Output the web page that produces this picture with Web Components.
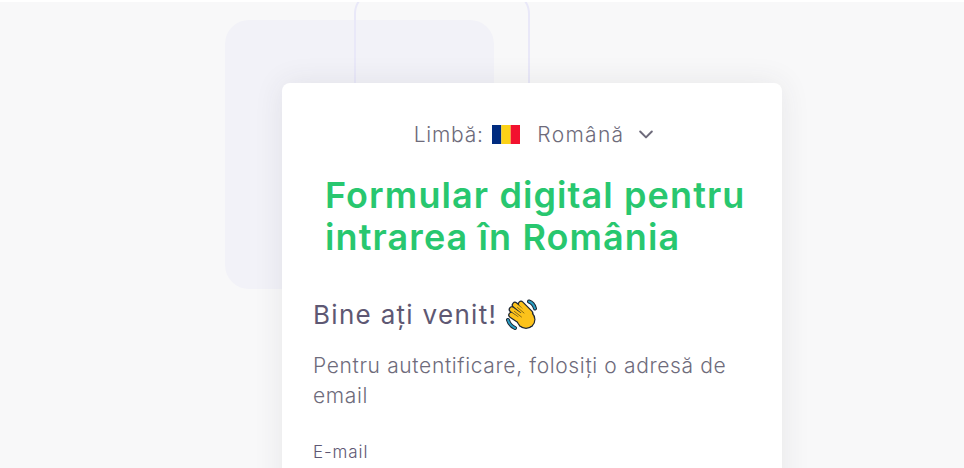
<!DOCTYPE html>
<html lang="ro">
<head>
<meta charset="utf-8">
<title>Formular digital</title>
<style>
    html, body { margin: 0; height: 100%; overflow: hidden; }
    body { background: #f8f8f9; border-top: 2px solid #fff; box-sizing: border-box; font-family: "Inter", "Liberation Sans", sans-serif; }
</style>
</head>
<body>
<login-page>
    <login-card>
        <lang-select slot="lang"></lang-select>
        <span slot="title">Formular digital pentru intrarea în România</span>
        <welcome-box></welcome-box>
    </login-card>
</login-page>

<script>
const pageTemplate = document.createElement("template");
pageTemplate.innerHTML = `
<style>
    :host {
        display: block;
        position: relative;
        height: 466px;
        overflow: hidden;
    }
    .square {
        position: absolute;
        left: 225px;
        top: 18px;
        width: 269px;
        height: 269px;
        border-radius: 24px;
        background: #f2f2f8;
    }
    .outline {
        position: absolute;
        left: 354px;
        top: -12px;
        width: 172px;
        height: 200px;
        border: 2px solid #e9e8f8;
        border-radius: 24px;
    }
    .wrap {
        position: relative;
        display: flex;
        padding: 81px 0 0 282px;
    }
</style>
<div class="square"></div>
<div class="outline"></div>
<div class="wrap"><slot></slot></div>
`;

class LoginPage extends HTMLElement {
    constructor() {
        super();
        this.attachShadow({mode: 'open'});
        this.shadowRoot.append(pageTemplate.content.cloneNode(true));
    }
}

const cardTemplate = document.createElement("template");
cardTemplate.innerHTML = `
<style>
    :host {
        display: block;
        box-sizing: border-box;
        width: 500px;
        height: 500px;
        padding: 37px 30px 0 31px;
        background: #fff;
        border-radius: 8px;
        box-shadow: 0 0 30px rgba(60, 60, 70, .09);
    }
    h1 {
        margin: 26px 0 0 12px;
        color: #28c76f;
        font-size: 36px;
        line-height: 42px;
        font-weight: 600;
        letter-spacing: 1.1px;
    }
</style>
<slot name="lang"></slot>
<h1><slot name="title"></slot></h1>
<slot></slot>
`;

class LoginCard extends HTMLElement {
    constructor() {
        super();
        this.attachShadow({mode: 'open'});
        this.shadowRoot.append(cardTemplate.content.cloneNode(true));
    }
}

const langTemplate = document.createElement("template");
langTemplate.innerHTML = `
<style>
    :host {
        display: flex;
        align-items: center;
        justify-content: center;
        height: 28px;
        padding-left: 4px;
        color: #6e6b7b;
        font-size: 21px;
        font-weight: 300;
        letter-spacing: .8px;
    }
    svg { display: block; }
    .flag { margin: 0 17px 0 8.500px; }
    .name { letter-spacing: 1.300px; }
    .caret { margin: 0 -1px 0 12px; }
</style>
<span>Limbă:</span>
<svg class="flag" width="28" height="19" viewBox="0 0 3 2" preserveAspectRatio="none">
    <rect width="1" height="2" fill="#002b7f"/>
    <rect x="1" width="1" height="2" fill="#fcd116"/>
    <rect x="2" width="1" height="2" fill="#f2112f"/>
</svg>
<span class="name">Română</span>
<svg class="caret" width="20" height="20" viewBox="0 0 24 24" fill="none" stroke="#6e6b7b" stroke-width="2.400" stroke-linecap="round" stroke-linejoin="round">
    <polyline points="5 9 12 16 19 9"/>
</svg>
`;

class LangSelect extends HTMLElement {
    constructor() {
        super();
        this.attachShadow({mode: 'open'});
        this.shadowRoot.append(langTemplate.content.cloneNode(true));
    }
}

const welcomeTemplate = document.createElement("template");
welcomeTemplate.innerHTML = `
<style>
    :host { display: block; margin-top: 40px; }
    h2 {
        display: flex;
        align-items: center;
        gap: 9px;
        margin: 0;
        color: #5e5873;
        font-size: 26px;
        line-height: 34px;
        font-weight: 400;
        letter-spacing: 1.300px;
    }
    p {
        margin: 19px 0 0;
        color: #6e6b7b;
        font-size: 21px;
        line-height: 30px;
        font-weight: 300;
        letter-spacing: .64px;
    }
    label {
        display: block;
        margin-top: 31px;
        color: #5e5873;
        font-size: 17px;
        line-height: 20px;
        font-weight: 300;
        letter-spacing: .9px;
    }
    .hand { flex: none; }
</style>
<h2>
    <span>Bine ați venit!</span>
    <svg class="hand" width="32" height="32" viewBox="0 0 32 32" fill="none" stroke-linecap="round">
        <g stroke="#1d2633">
            <path d="M23 2.500Q27.500 4 29 9.500M2 21Q3.500 26.500 9 29" stroke-width="4"/>
            <path d="M15 5 24 14M9 6 21 16M6 10.500 18 19M5.500 16 16 23" stroke-width="6.600"/>
            <circle cx="20" cy="20.500" r="9.500" fill="#1d2633" stroke="none"/>
        </g>
        <path d="M23 2.500Q27.500 4 29 9.500M2 21Q3.500 26.500 9 29" stroke="#2b9ec4" stroke-width="2"/>
        <g stroke="#fcc21b">
            <path d="M15 5 24 14M9 6 21 16M6 10.500 18 19M5.500 16 16 23" stroke-width="4.200"/>
            <circle cx="20" cy="20.500" r="8.300" fill="#fcc21b" stroke="none"/>
        </g>
        <path d="M11.500 8.500 18 14M8.500 12.500 15.500 18" stroke="#8a6a10" stroke-width="1"/>
    </svg>
</h2>
<p>Pentru autentificare, folosiți o adresă de email</p>
<label>E-mail</label>
`;

class WelcomeBox extends HTMLElement {
    constructor() {
        super();
        this.attachShadow({mode: 'open'});
        this.shadowRoot.append(welcomeTemplate.content.cloneNode(true));
    }
}

customElements.define("login-page", LoginPage);
customElements.define("login-card", LoginCard);
customElements.define("lang-select", LangSelect);
customElements.define("welcome-box", WelcomeBox);
</script>
</body>
</html>
